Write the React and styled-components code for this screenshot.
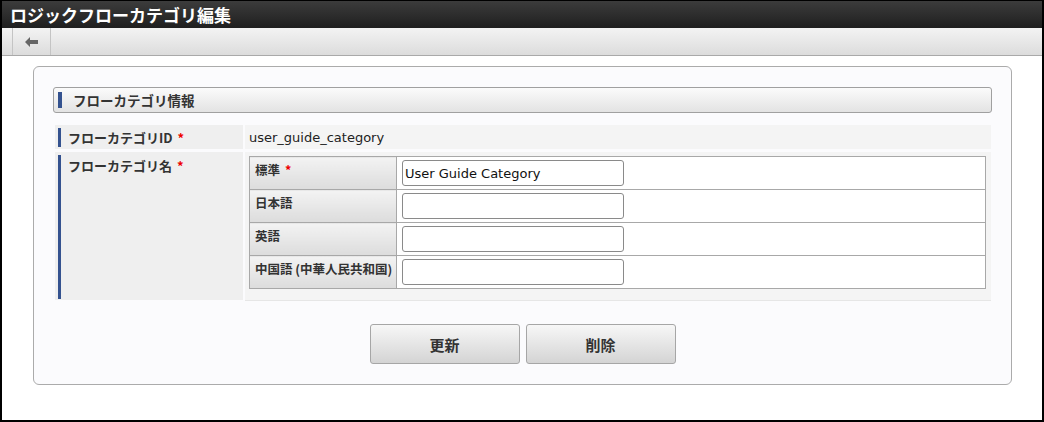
import React from 'react'
import styled, { createGlobalStyle } from 'styled-components'

const blue = '#34528f'
const latin = '"DejaVu Sans", "Noto Sans CJK JP", sans-serif'

const Global = createGlobalStyle`
  html, body { margin:0; padding:0; background:#fff; }
  body { font-family: "Noto Sans CJK JP", "DejaVu Sans", sans-serif; color:#333; }
  * { box-sizing:border-box; }
`

const Frame = styled.div`
  width:1044px;
  height:422px;
  border:2px solid #000;
  border-top-width:1px;
  background:#fff;
  display:flex;
  flex-direction:column;
`
const TitleBar = styled.div`
  height:27px;
  background:linear-gradient(#3c3c3c, #1f1f1f);
  color:#fff;
  font-size:17px;
  font-weight:700;
  line-height:27px;
  padding-left:8px;
  flex-shrink:0;
`
const Toolbar = styled.div`
  height:28px;
  background:linear-gradient(#f3f3f3, #dcdcdc);
  border-bottom:1px solid #a9a9a9;
  padding-left:10px;
  display:flex;
  flex-shrink:0;
`
const ToolButton = styled.div`
  width:39px;
  border-left:1px solid #c4c4c4;
  border-right:1px solid #c4c4c4;
  display:flex;
  align-items:center;
  justify-content:center;
`
const Body = styled.div`
  padding:10px 30px 0 31px;
`
const Panel = styled.div`
  border:1px solid #ababab;
  border-radius:6px;
  background:#fbfbfd;
  padding:20px 19px 20px 19px;
  height:319px;
`
const SectionHeader = styled.div`
  height:26px;
  border:1px solid #a0a0a0;
  border-radius:3px;
  background:linear-gradient(#fbfbfb, #e3e3e3);
  display:flex;
  align-items:center;
  padding-left:4px;
  font-size:13.5px;
  font-weight:700;
  color:#333;
  margin-bottom:12px;
`
const Bar = styled.span`
  width:4px;
  height:16px;
  background:${blue};
  margin-right:11px;
`
const FormTable = styled.div`
  display:grid;
  grid-template-columns:188px 1fr;
  gap:3px 2px;
  margin:0 2px;
`
const Label = styled.div`
  background:#efefef;
  position:relative;
  padding:${p => (p.tall ? '4px 0 0 13px' : '0 0 0 13px')};
  display:flex;
  align-items:${p => (p.tall ? 'flex-start' : 'center')};
  font-size:13px;
  font-weight:700;
  color:#333;
  height:${p => (p.tall ? '148px' : '24px')};
  &::before {
    content:'';
    position:absolute;
    left:3px;
    top:3px;
    bottom:${p => (p.tall ? '1px' : '2px')};
    width:3px;
    background:${blue};
  }
`
const Req = styled.span`
  color:#e00;
  margin-left:5px;
`
const Value = styled.div`
  background:#f4f4f4;
  font-family:${latin};
  font-size:13px;
  color:#222;
  display:flex;
  align-items:${p => (p.top ? 'flex-start' : 'center')};
  padding:${p => (p.top ? '4px 5px 11px 4px' : '0 0 0 4px')};
  border-bottom:${p => (p.top ? '1px solid #e6e6e6' : 'none')};
`
const Inner = styled.table`
  border-collapse:collapse;
  width:737px;
  border:1px solid #a8a8a8;
`
const InnerLabel = styled.td`
  width:147px;
  height:33px;
  background:linear-gradient(#f3f3f3, #dcdcdc);
  border:1px solid #a8a8a8;
  font-family:"Noto Sans CJK JP", sans-serif;
  font-size:12.5px;
  font-weight:700;
  color:#333;
  vertical-align:top;
  padding:3px 0 0 5px;
  white-space:nowrap;
`
const InnerValue = styled.td`
  background:#fff;
  border:1px solid #a8a8a8;
  padding:0 0 0 5px;
  vertical-align:middle;
`
const Input = styled.input`
  width:222px;
  height:26px;
  border:1px solid #8a8a8a;
  border-radius:3px;
  padding:0 2px;
  font-family:${latin};
  font-size:13px;
  color:#111;
  display:block;
`
const Buttons = styled.div`
  display:flex;
  justify-content:center;
  gap:6px;
  margin-top:23px;
`
const Button = styled.button`
  width:150px;
  height:40px;
  border:1px solid #a6a6a6;
  border-radius:3px;
  background:linear-gradient(#f7f7f7, #d4d4d4);
  font-family:"Noto Sans CJK JP", sans-serif;
  font-size:15px;
  font-weight:700;
  color:#333;
`

const rows = [
  { label: '標準', req: true, value: 'User Guide Category' },
  { label: '日本語', value: '' },
  { label: '英語', value: '' },
  { label: '中国語 (中華人民共和国)', value: '' },
]

const App = () => {
  return (
    <Frame>
      <Global />
      <TitleBar>ロジックフローカテゴリ編集</TitleBar>
      <Toolbar>
        <ToolButton>
          <svg width="14" height="10" viewBox="0 0 14 10">
            <path d="M0 5 L5 0 L5 3 L13 3 L13 7 L5 7 L5 10 Z" fill="#666" />
          </svg>
        </ToolButton>
      </Toolbar>
      <Body>
        <Panel>
          <SectionHeader><Bar />フローカテゴリ情報</SectionHeader>
          <FormTable>
            <Label>フローカテゴリID<Req>*</Req></Label>
            <Value>user_guide_category</Value>
            <Label tall>フローカテゴリ名<Req>*</Req></Label>
            <Value top>
              <Inner>
                <tbody>
                  {rows.map(r => (
                    <tr key={r.label}>
                      <InnerLabel>{r.label}{r.req && <Req>*</Req>}</InnerLabel>
                      <InnerValue><Input defaultValue={r.value} /></InnerValue>
                    </tr>
                  ))}
                </tbody>
              </Inner>
            </Value>
          </FormTable>
          <Buttons>
            <Button>更新</Button>
            <Button>削除</Button>
          </Buttons>
        </Panel>
      </Body>
    </Frame>
  )
}

export default App
